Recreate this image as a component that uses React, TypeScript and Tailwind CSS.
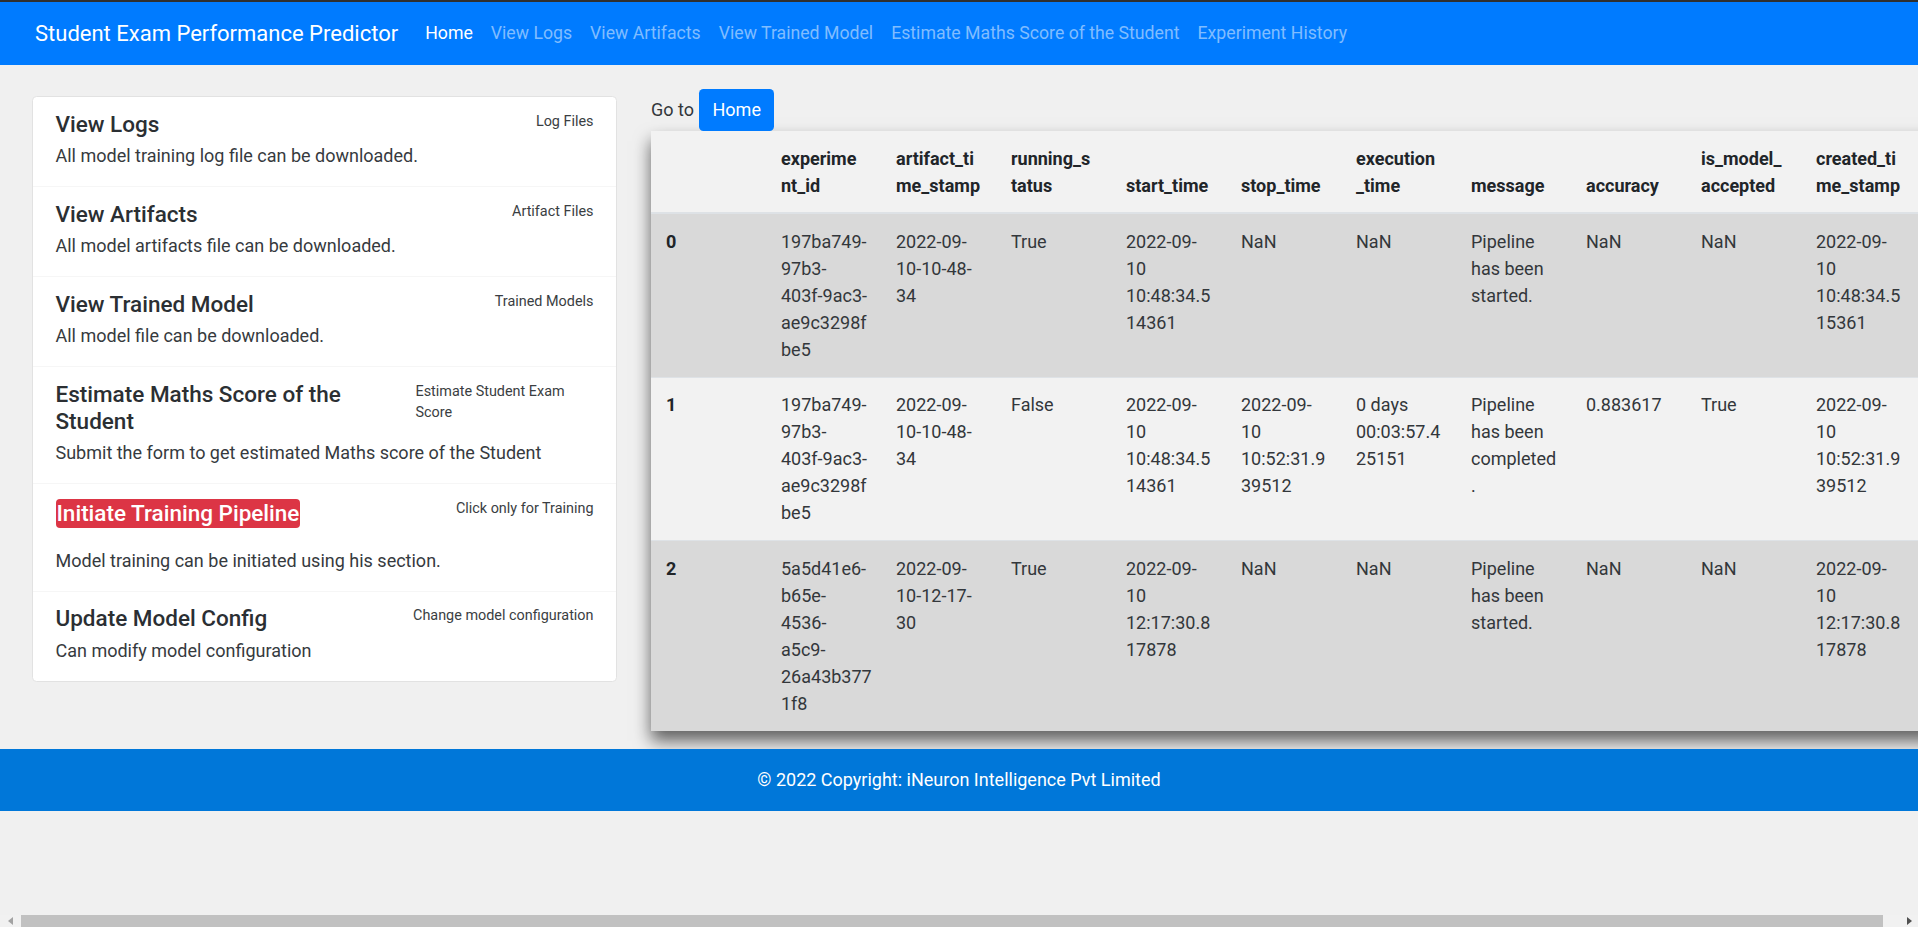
import React from "react";

const header: string[][] = [
  [""],
  ["experime", "nt_id"],
  ["artifact_ti", "me_stamp"],
  ["running_s", "tatus"],
  ["start_time"],
  ["stop_time"],
  ["execution", "_time"],
  ["message"],
  ["accuracy"],
  ["is_model_", "accepted"],
  ["created_ti", "me_stamp"],
];

const rows: string[][][] = [
  [
    ["0"],
    ["197ba749-", "97b3-", "403f-9ac3-", "ae9c3298f", "be5"],
    ["2022-09-", "10-10-48-", "34"],
    ["True"],
    ["2022-09-", "10", "10:48:34.5", "14361"],
    ["NaN"],
    ["NaN"],
    ["Pipeline", "has been", "started."],
    ["NaN"],
    ["NaN"],
    ["2022-09-", "10", "10:48:34.5", "15361"],
  ],
  [
    ["1"],
    ["197ba749-", "97b3-", "403f-9ac3-", "ae9c3298f", "be5"],
    ["2022-09-", "10-10-48-", "34"],
    ["False"],
    ["2022-09-", "10", "10:48:34.5", "14361"],
    ["2022-09-", "10", "10:52:31.9", "39512"],
    ["0 days", "00:03:57.4", "25151"],
    ["Pipeline", "has been", "completed", "."],
    ["0.883617"],
    ["True"],
    ["2022-09-", "10", "10:52:31.9", "39512"],
  ],
  [
    ["2"],
    ["5a5d41e6-", "b65e-", "4536-", "a5c9-", "26a43b377", "1f8"],
    ["2022-09-", "10-12-17-", "30"],
    ["True"],
    ["2022-09-", "10", "12:17:30.8", "17878"],
    ["NaN"],
    ["NaN"],
    ["Pipeline", "has been", "started."],
    ["NaN"],
    ["NaN"],
    ["2022-09-", "10", "12:17:30.8", "17878"],
  ],
];

const rowBg = ["bg-[#d9d9d9]", "bg-[#f2f2f2]", "bg-[#d9d9d9]"];

function Lines({ lines }: { lines: string[] }) {
  return (
    <>
      {lines.map((l, i) => (
        <span key={i} className="block whitespace-nowrap">
          {l === "" ? "\u00a0" : l}
        </span>
      ))}
    </>
  );
}

function Item({
  title,
  desc,
  small,
  smallClass = "",
  last = false,
}: {
  title: React.ReactNode;
  desc: string;
  small: React.ReactNode;
  smallClass?: string;
  last?: boolean;
}) {
  return (
    <div
      className={
        "px-[22.5px] pt-[13.5px] pb-[17px] " +
        (last ? "" : "border-b border-[#f6f6f6]")
      }
    >
      <div className="flex justify-between">
        <h5 className="text-[22.5px] leading-[27px] font-medium text-[#2b2f33]">
          {title}
        </h5>
        <small className={"text-[14.4px] leading-[21.6px] text-[#3a3e42] " + smallClass}>
          {small}
        </small>
      </div>
      <p className="mt-[4.5px] text-[18px] leading-[27px] text-[#363a3e]">{desc}</p>
    </div>
  );
}

export default function App() {
  return (
    <div className="flex h-[927px] w-full flex-col overflow-hidden bg-[#f0f0f0] font-['Roboto','Liberation_Sans',sans-serif] text-[18px] leading-[27px] text-[#33373b]">
      <div className="h-[2px] shrink-0 bg-[#2f2f2f]" />
      <nav className="flex h-[63px] shrink-0 items-center bg-[#007bff] pl-[35px] text-[17.7px]">
        <span className="mr-[18px] text-[22px] leading-[34px] text-white">
          Student Exam Performance Predictor
        </span>
        <a className="px-[9px] text-white">Home</a>
        <a className="px-[9px] text-[#80bdff]">View Logs</a>
        <a className="px-[9px] text-[#80bdff]">View Artifacts</a>
        <a className="px-[9px] text-[#80bdff]">View Trained Model</a>
        <a className="px-[9px] text-[#80bdff]">Estimate Maths Score of the Student</a>
        <a className="px-[9px] text-[#80bdff]">Experiment History</a>
      </nav>

      <div className="flex shrink-0 items-start">
        <div className="ml-[32px] mt-[31px] w-[585px] shrink-0 rounded-[4.5px] border border-[#e2e2e2] bg-white">
          <Item title="View Logs" desc="All model training log file can be downloaded." small="Log Files" />
          <Item title="View Artifacts" desc="All model artifacts file can be downloaded." small="Artifact Files" />
          <Item title="View Trained Model" desc="All model file can be downloaded." small="Trained Models" />
          <Item
            title={
              <>
                Estimate Maths Score of the
                <br />
                Student
              </>
            }
            desc="Submit the form to get estimated Maths score of the Student"
            small={
              <>
                Estimate Student Exam
                <br />
                Score
              </>
            }
            smallClass="w-[178px]"
          />
          <div className="border-b border-[#f6f6f6] px-[22.5px] pt-[13.5px] pb-[17px]">
            <div className="flex h-[44.5px] justify-between">
              <h5 className="pt-[1px] text-[22.5px] leading-[27px] font-medium">
                <span className="inline-block h-[29px] rounded-[4px] bg-[#dc3545] px-[1px] leading-[29px] text-white">
                  Initiate Training Pipeline
                </span>
              </h5>
              <small className="text-[14.4px] leading-[21.6px] text-[#3a3e42]">
                Click only for Training
              </small>
            </div>
            <p className="mt-[4.5px] text-[18px] leading-[27px] text-[#363a3e]">
              Model training can be initiated using his section.
            </p>
          </div>
          <Item
            title="Update Model Config"
            desc="Can modify model configuration"
            small="Change model configuration"
            last
          />
        </div>

        <div className="ml-[34px] mt-[23px] shrink-0">
          <div className="flex h-[43px] items-center">
            <span>Go to</span>
            <button className="ml-[5px] h-[42px] rounded-[4.5px] bg-[#007bff] px-[13.5px] text-white">
              Home
            </button>
          </div>
          <table className="w-[1310px] table-fixed border-collapse shadow-[0_10px_16px_rgba(0,0,0,0.6)]">
            <colgroup>
              {header.map((_, i) => (
                <col key={i} className={i === header.length - 1 ? "w-[160px]" : "w-[115px]"} />
              ))}
            </colgroup>
            <thead>
              <tr className="bg-[#f2f2f2]">
                {header.map((h, i) => (
                  <th
                    key={i}
                    className="border-b-2 border-[#dee2e6] pt-[13.5px] pb-[13.5px] pl-[15px] pr-[10px] text-left align-bottom font-bold text-[#212529]"
                  >
                    <Lines lines={h} />
                  </th>
                ))}
              </tr>
            </thead>
            <tbody>
              {rows.map((r, ri) => (
                <tr key={ri} className={rowBg[ri]}>
                  {r.map((c, ci) => (
                    <td
                      key={ci}
                      className={
                        "border-t border-[#dee2e6] pt-[13.5px] pb-[14px] pl-[15px] pr-[10px] align-top " +
                        (ci === 0 ? "font-bold text-[#212529]" : "")
                      }
                    >
                      <Lines lines={c} />
                    </td>
                  ))}
                </tr>
              ))}
            </tbody>
          </table>
        </div>
      </div>

      <footer className="mt-[18px] flex h-[62px] shrink-0 items-center justify-center bg-[#0077d9] text-[18px] text-white">
        © 2022 Copyright: iNeuron Intelligence Pvt Limited
      </footer>

      <div className="flex-1" />

      <div className="flex h-[12px] shrink-0 items-center bg-[#f1f1f1]">
        <div className="flex w-[21px] justify-center">
          <svg width="5" height="8" viewBox="0 0 5 8">
            <path d="M5 0 L0 4 L5 8 Z" fill="#a3a3a3" />
          </svg>
        </div>
        <div className="h-full flex-1 bg-[#c1c1c1]" />
        <div className="flex w-[35px] justify-end pr-[6px]">
          <svg width="5" height="8" viewBox="0 0 5 8">
            <path d="M0 0 L5 4 L0 8 Z" fill="#505050" />
          </svg>
        </div>
      </div>
    </div>
  );
}
